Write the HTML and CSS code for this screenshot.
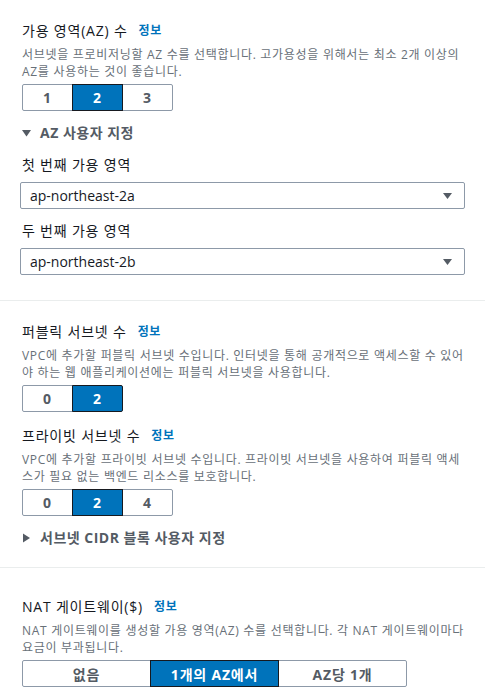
FILE: index.html
```html
<!DOCTYPE html>
<html lang="ko">
<head>
<meta charset="utf-8">
<link rel="stylesheet" href="styles.css">
</head>
<body>
<section class="sec sec-first">
  <div class="label">가용 영역(AZ) 수<a class="info">정보</a></div>
  <p class="desc">서브넷을 프로비저닝할 AZ 수를 선택합니다. 고가용성을 위해서는 최소 2개 이상의 AZ를 사용하는 것이 좋습니다.</p>
  <div class="seg">
    <span class="btn">1</span><span class="btn on">2</span><span class="btn">3</span>
  </div>
  <div class="exp">
    <svg class="tri" width="9" height="8" viewBox="0 0 9 8"><path d="M0 1h9L4.5 7.5z" fill="#545b64"/></svg>
    <span>AZ 사용자 지정</span>
  </div>
  <div class="field-label">첫 번째 가용 영역</div>
  <div class="select"><span>ap-northeast-2a</span><svg width="9" height="6" viewBox="0 0 9 6"><path d="M0 0h9L4.5 6z" fill="#545b64"/></svg></div>
  <div class="field-label">두 번째 가용 영역</div>
  <div class="select"><span>ap-northeast-2b</span><svg width="9" height="6" viewBox="0 0 9 6"><path d="M0 0h9L4.5 6z" fill="#545b64"/></svg></div>
</section>
<section class="sec sec-second">
  <div class="label">퍼블릭 서브넷 수<a class="info">정보</a></div>
  <p class="desc">VPC에 추가할 퍼블릭 서브넷 수입니다. 인터넷을 통해 공개적으로 액세스할 수 있어야 하는 웹 애플리케이션에는 퍼블릭 서브넷을 사용합니다.</p>
  <div class="seg">
    <span class="btn">0</span><span class="btn on">2</span>
  </div>
  <div class="label label-next">프라이빗 서브넷 수<a class="info">정보</a></div>
  <p class="desc">VPC에 추가할 프라이빗 서브넷 수입니다. 프라이빗 서브넷을 사용하여 퍼블릭 액세스가 필요 없는 백엔드 리소스를 보호합니다.</p>
  <div class="seg">
    <span class="btn">0</span><span class="btn on">2</span><span class="btn">4</span>
  </div>
  <div class="exp">
    <svg class="tri" width="9" height="10" viewBox="0 0 9 10"><path d="M1 0.5v9L8 5z" fill="#545b64"/></svg>
    <span>서브넷 CIDR 블록 사용자 지정</span>
  </div>
</section>
<section class="sec sec-third">
  <div class="label">NAT 게이트웨이($)<a class="info">정보</a></div>
  <p class="desc">NAT 게이트웨이를 생성할 가용 영역(AZ) 수를 선택합니다. 각 NAT 게이트웨이마다 요금이 부과됩니다.</p>
  <div class="seg seg-wide">
    <span class="btn">없음</span><span class="btn on">1개의 AZ에서</span><span class="btn">AZ당 1개</span>
  </div>
</section>
</body>
</html>
```
FILE: styles.css
```css
html, body {
  margin: 0;
  padding: 0;
  background: #ffffff;
}
body {
  font-family: "Open Sans", "Noto Sans CJK KR", sans-serif;
  color: #16191f;
  width: 485px;
  letter-spacing: 0.8px;
}
.sec {
  padding: 0 20px 0 22px;
  border-bottom: 1px solid #eaeded;
}
.sec-first {
  padding-top: 21px;
  padding-bottom: 25px;
}
.sec-second {
  padding-top: 21px;
  padding-bottom: 19px;
}
.sec-third {
  padding-top: 29px;
  border-bottom: none;
}
.label {
  font-size: 14px;
  line-height: 20px;
  color: #16191f;
  display: flex;
  align-items: center;
}
.label-next {
  margin-top: 14px;
}
.info {
  color: #0073bb;
  font-size: 12px;
  font-weight: 700;
  margin-left: 11px;
  letter-spacing: 0.6px;
}
.desc {
  margin: 5px -6px 0 0;
  font-size: 12px;
  line-height: 17px;
  color: #687078;
  letter-spacing: 0.7px;
}
.seg {
  display: flex;
  margin-top: 4px;
}
.btn {
  width: 51px;
  height: 27px;
  box-sizing: border-box;
  border: 1px solid #8d99a8;
  display: flex;
  align-items: center;
  justify-content: center;
  font-size: 14px;
  font-weight: 700;
  color: #545b64;
  background: #fff;
  margin-left: -1px;
}
.btn:first-child {
  margin-left: 0;
  border-radius: 2px 0 0 2px;
}
.btn:last-child {
  border-radius: 0 2px 2px 0;
}
.btn.on {
  background: #0073bb;
  color: #ffffff;
  border-color: #16191f;
  position: relative;
}
.seg-wide .btn {
  width: 129px;
}
.exp {
  display: flex;
  align-items: center;
  margin-top: 12px;
  font-size: 14px;
  font-weight: 700;
  line-height: 20px;
  color: #545b64;
  letter-spacing: 0.5px;
}
.tri {
  margin-right: 9px;
}
.field-label {
  margin-top: 12px;
  font-size: 14px;
  line-height: 20px;
  color: #16191f;
}
.select {
  margin: 7px 0 0 -2px;
  height: 27px;
  box-sizing: border-box;
  border: 1px solid #8d99a8;
  border-radius: 2px;
  display: flex;
  align-items: center;
  justify-content: space-between;
  padding: 0 12px 0 9px;
  font-size: 14px;
  color: #16191f;
  letter-spacing: 0;
}
```
